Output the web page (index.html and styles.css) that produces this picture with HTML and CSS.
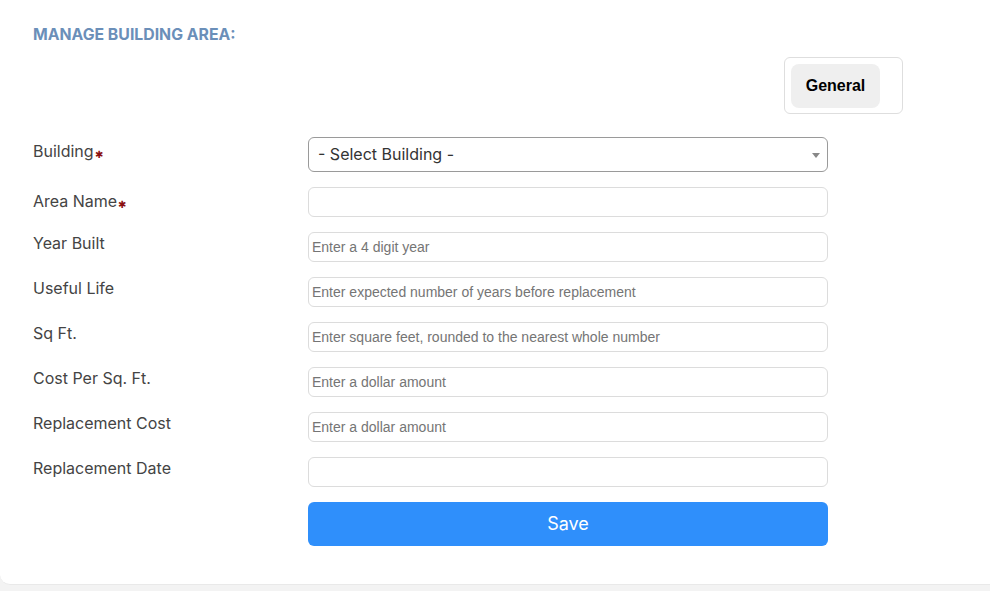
FILE: index.html
```html
<!DOCTYPE html>
<html>
<head>
<meta charset="utf-8">
<link rel="stylesheet" href="styles.css">
</head>
<body>
<div class="card">
  <h1 class="title">MANAGE BUILDING AREA:</h1>
  <div class="tabs-row">
    <div class="tabs">
      <div class="tab">General</div>
    </div>
  </div>
  <form class="form">
    <label class="lbl req">Building<span class="ast">&#10033;</span></label>
    <div class="select">
      <span class="select-text">- Select Building -</span>
      <span class="caret"></span>
    </div>

    <label class="lbl req">Area Name<span class="ast">&#10033;</span></label>
    <div class="input"></div>

    <label class="lbl">Year Built</label>
    <div class="input"><span class="ph">Enter a 4 digit year</span></div>

    <label class="lbl">Useful Life</label>
    <div class="input"><span class="ph">Enter expected number of years before replacement</span></div>

    <label class="lbl">Sq Ft.</label>
    <div class="input"><span class="ph">Enter square feet, rounded to the nearest whole number</span></div>

    <label class="lbl">Cost Per Sq. Ft.</label>
    <div class="input"><span class="ph">Enter a dollar amount</span></div>

    <label class="lbl">Replacement Cost</label>
    <div class="input"><span class="ph">Enter a dollar amount</span></div>

    <label class="lbl">Replacement Date</label>
    <div class="input"></div>

    <div></div>
    <button type="button" class="save">Save</button>
  </form>
</div>
</body>
</html>
```

FILE: styles.css
```css
* { box-sizing: border-box; }
html, body { margin: 0; padding: 0; }
body {
  background: #f3f3f3;
  font-family: Inter, "Liberation Sans", sans-serif;
  width: 990px;
  height: 591px;
  overflow: hidden;
}
.card {
  background: #fff;
  height: 585px;
  width: 1000px;
  border-bottom: 1px solid #e9e9e9;
  border-radius: 0 0 10px 10px;
  padding: 26px 0 0 33px;
}
.title {
  margin: 0;
  font-size: 15.8px;
  line-height: 18px;
  font-weight: 700;
  color: #6b8fb9;
}
.tabs-row {
  display: flex;
  padding-left: 751px;
  margin-top: 13px;
}
.tabs {
  border: 1px solid #dedede;
  border-radius: 6px;
  padding: 6px 22px 5px 6px;
}
.tab {
  width: 89px;
  height: 44px;
  background: #efefef;
  border-radius: 8px;
  display: flex;
  align-items: center;
  justify-content: center;
  font-family: "Liberation Sans", Arial, sans-serif;
  font-weight: 700;
  font-size: 16px;
  color: #000;
}
.form {
  margin-top: 23px;
  display: grid;
  grid-template-columns: 275px 520px;
  row-gap: 15px;
  align-items: start;
}
.lbl {
  font-size: 16px;
  line-height: 22px;
  color: #444;
}
.lbl.req { padding-top: 3px; }
.ast {
  color: #8b1010;
  font-size: 10px;
  vertical-align: -1px;
  margin-left: 1px;
}
.select {
  height: 35px;
  border: 1px solid #9a9a9a;
  border-radius: 6px;
  display: flex;
  align-items: center;
  justify-content: space-between;
  padding: 0 7px 1px 9px;
}
.select-text {
  font-size: 16px;
  color: #333;
}
.caret {
  width: 0;
  height: 0;
  border-left: 4px solid transparent;
  border-right: 4px solid transparent;
  border-top: 5px solid #888;
  margin-top: 3px;
}
.input {
  height: 30px;
  border: 1px solid #dcdcdc;
  border-radius: 6px;
  display: flex;
  align-items: center;
  padding: 0 0 0 3px;
}
.ph {
  font-family: "Liberation Sans", Arial, sans-serif;
  font-size: 14px;
  color: #757575;
}
.save {
  margin-top: 0;
  height: 44px;
  border: none;
  border-radius: 6px;
  background: #2f8ffb;
  color: #fff;
  font-family: Inter, "Liberation Sans", sans-serif;
  font-size: 18px;
  padding: 0 0 2px;
  cursor: pointer;
}
```
